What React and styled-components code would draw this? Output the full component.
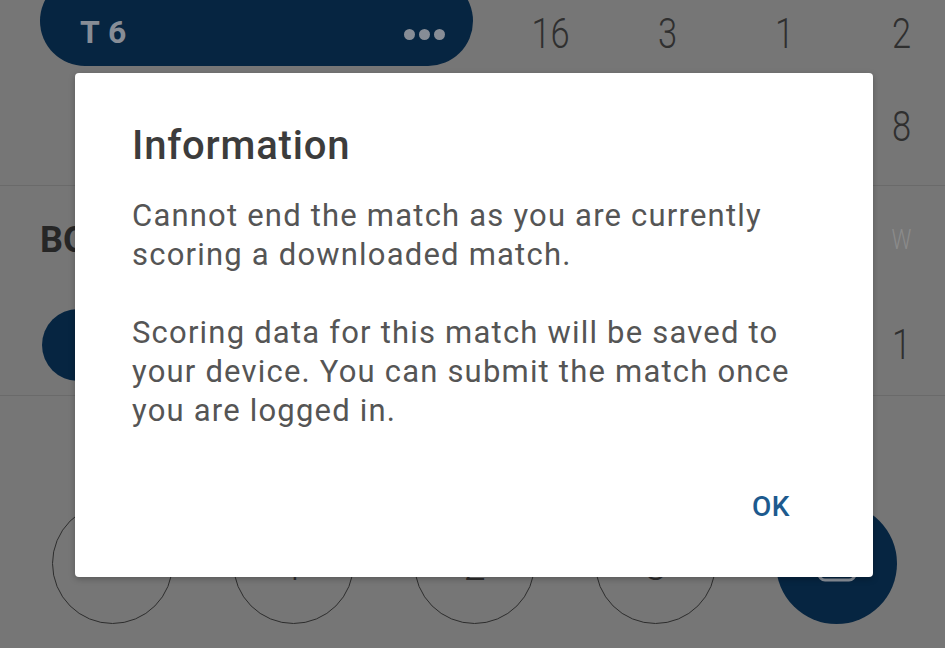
import React from 'react';
import styled, { createGlobalStyle } from 'styled-components';

const GlobalStyle = createGlobalStyle`
  html, body {
    margin: 0;
    padding: 0;
    background: #767676;
    overflow: hidden;
  }
  * { box-sizing: border-box; }
`;

const Screen = styled.div`
  position: relative;
  width: 945px;
  height: 648px;
  overflow: hidden;
  background: #767676;
  font-family: Roboto, 'Liberation Sans', sans-serif;
`;

// ---------- scoreboard behind the dialog ----------

const Row = styled.div`
  display: grid;
  grid-template-columns: 492px repeat(4, 117px);
  align-items: center;
  height: ${(p) => p.height}px;
  border-bottom: ${(p) => (p.divider ? '1.5px solid #6a6a6a' : 'none')};
`;

const BatterPill = styled.div`
  margin: -25px 0 0 40px;
  width: 433px;
  height: 90px;
  border-radius: 45px;
  background: #062541;
  display: flex;
  align-items: flex-end;
  justify-content: space-between;
  padding: 0 28px 18px 40px;
`;

const PillName = styled.span`
  font-size: 32px;
  font-weight: 700;
  color: #878d96;
  letter-spacing: 0.5px;
  line-height: 1;
`;

const Dots = styled.span`
  display: flex;
  gap: 4px;
  margin-bottom: 8px;
`;

const Dot = styled.i`
  width: 11px;
  height: 11px;
  border-radius: 50%;
  background: #878d96;
`;

const Stat = styled.span`
  text-align: center;
  font-size: ${(p) => (p.small ? 27 : 42)}px;
  font-weight: 300;
  color: ${(p) => (p.faint ? '#8b8b8b' : '#2f2f2f')};
  transform: scaleX(0.82);
  grid-column: ${(p) => p.col || 'auto'};
`;

const SectionLabel = styled.span`
  white-space: nowrap;
  padding-left: 40px;
  font-size: 36px;
  font-weight: 700;
  color: #262626;
`;

const BowlerPill = styled.div`
  margin-left: 42px;
  width: 300px;
  height: 72px;
  border-radius: 36px;
  background: #062541;
`;

const Keypad = styled.div`
  display: flex;
  gap: 60px;
  padding: 107px 0 0 52px;
`;

const Key = styled.div`
  width: 121px;
  height: 121px;
  border-radius: 50%;
  border: ${(p) => (p.filled ? 'none' : '1.5px solid #2d2d2d')};
  background: ${(p) => (p.filled ? '#062541' : 'transparent')};
  display: flex;
  align-items: center;
  justify-content: center;
  padding-top: ${(p) => (p.filled ? 0 : 6)}px;
  font-size: 40px;
  font-weight: 300;
  color: #2d2d2d;
`;

// ---------- dialog ----------

const Dialog = styled.div`
  position: absolute;
  left: 75px;
  top: 73px;
  width: 798px;
  height: 504px;
  background: #ffffff;
  border-radius: 4px;
  box-shadow: 0 2px 6px rgba(0, 0, 0, 0.25);
  padding: 46px 56px 0 57px;
  display: flex;
  flex-direction: column;
`;

const Title = styled.h2`
  margin: 0;
  font-size: 40px;
  line-height: 54px;
  font-weight: 500;
  letter-spacing: 0.8px;
  color: #3c3c3c;
`;

const Message = styled.p`
  margin: ${(p) => (p.first ? '23px' : '39px')} 0 0;
  font-size: 31px;
  line-height: 39px;
  letter-spacing: 1.2px;
  color: #555555;
`;

const Actions = styled.div`
  display: flex;
  justify-content: flex-end;
  margin-top: 57px;
  padding-right: 27px;
`;

const TextButton = styled.button`
  border: none;
  background: none;
  padding: 0;
  font-family: inherit;
  font-size: 28px;
  font-weight: 500;
  letter-spacing: 0.5px;
  color: #1d5a8e;
  line-height: 40px;
`;

const KeyIcon = () => (
  <svg width="44" height="40" viewBox="0 0 44 40" fill="none" stroke="#8a9099" strokeWidth="3">
    <rect x="4" y="4" width="36" height="32" rx="6" />
  </svg>
);

export default function App() {
  return (
    <Screen>
      <GlobalStyle />

      <Row height={67}>
        <BatterPill>
          <PillName>T 6</PillName>
          <Dots><Dot /><Dot /><Dot /></Dots>
        </BatterPill>
        <Stat>16</Stat>
        <Stat>3</Stat>
        <Stat>1</Stat>
        <Stat>2</Stat>
      </Row>
      <Row height={119} divider>
        <span />
        <Stat col={5}>8</Stat>
      </Row>

      <Row height={108}>
        <SectionLabel>BOWLER</SectionLabel>
        <Stat col={5} small faint>W</Stat>
      </Row>
      <Row height={102} divider>
        <BowlerPill />
        <Stat col={5}>1</Stat>
      </Row>

      <Keypad>
        <Key>•</Key>
        <Key>1</Key>
        <Key>2</Key>
        <Key>3</Key>
        <Key filled><KeyIcon /></Key>
      </Keypad>

      <Dialog role="dialog">
        <Title>Information</Title>
        <Message first>
          Cannot end the match as you are currently scoring a downloaded match.
        </Message>
        <Message>
          Scoring data for this match will be saved to your device. You can submit the match once
          you are logged in.
        </Message>
        <Actions>
          <TextButton>OK</TextButton>
        </Actions>
      </Dialog>
    </Screen>
  );
}
